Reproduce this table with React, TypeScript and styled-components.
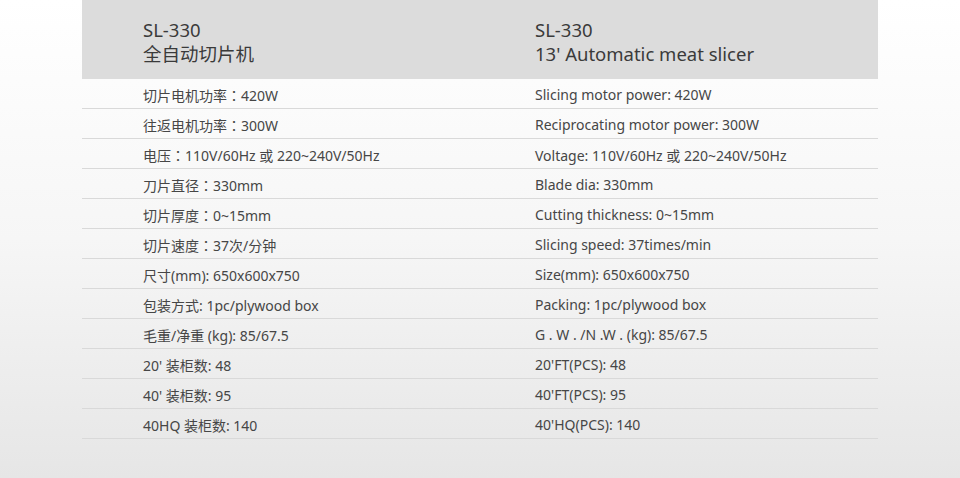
import React from "react";
import styled, { createGlobalStyle } from "styled-components";

const Global = createGlobalStyle`
  html, body { margin: 0; padding: 0; }
  body { font-family: "Noto Sans", "Noto Sans CJK SC", sans-serif; }
`;

const Page = styled.div`
  min-height: 478px;
  box-sizing: border-box;
  padding: 0 82px;
  background: linear-gradient(to bottom, #ffffff 0%, #f6f6f6 50%, #e6e6e6 100%);
`;

const Header = styled.div`
  display: grid;
  grid-template-columns: 392px 1fr;
  padding: 18px 0 0 61px;
  height: 79px;
  box-sizing: border-box;
  background: #dcdcdc;
  color: #3a3a3a;
  font-size: 18.5px;
  line-height: 24px;
`;

const Row = styled.div`
  display: grid;
  grid-template-columns: 392px 1fr;
  align-items: center;
  padding: 2px 0 0 61px;
  height: 30px;
  box-sizing: border-box;
  border-bottom: 1px solid #d9d9d9;
  color: #464646;
  font-size: 14px;
`;

const Cell = styled.div`
  white-space: nowrap;
`;

const Colon = styled.span`
  font-family: "Noto Sans CJK JP", sans-serif;
`;

const withColon = (text: string) => {
  const parts = text.split("：");
  return parts.map((p, i) => (
    <React.Fragment key={i}>
      {i > 0 && <Colon>：</Colon>}
      {p}
    </React.Fragment>
  ));
};

const rows: [string, string][] = [
  ["切片电机功率：420W", "Slicing motor power: 420W"],
  ["往返电机功率：300W", "Reciprocating motor power: 300W"],
  ["电压：110V/60Hz 或 220~240V/50Hz", "Voltage: 110V/60Hz 或 220~240V/50Hz"],
  ["刀片直径：330mm", "Blade dia: 330mm"],
  ["切片厚度：0~15mm", "Cutting thickness: 0~15mm"],
  ["切片速度：37次/分钟", "Slicing speed: 37times/min"],
  ["尺寸(mm): 650x600x750", "Size(mm): 650x600x750"],
  ["包装方式: 1pc/plywood box", "Packing: 1pc/plywood box"],
  ["毛重/净重 (kg): 85/67.5", "G . W . /N .W . (kg): 85/67.5"],
  ["20' 装柜数: 48", "20'FT(PCS): 48"],
  ["40' 装柜数: 95", "40'FT(PCS): 95"],
  ["40HQ 装柜数: 140", "40'HQ(PCS): 140"],
];

export default function App() {
  return (
    <Page>
      <Global />
      <Header>
        <Cell>
          SL-330
          <br />
          全自动切片机
        </Cell>
        <Cell>
          SL-330
          <br />
          13' Automatic meat slicer
        </Cell>
      </Header>
      {rows.map(([cn, en], i) => (
        <Row key={i}>
          <Cell>{withColon(cn)}</Cell>
          <Cell>{en}</Cell>
        </Row>
      ))}
    </Page>
  );
}
